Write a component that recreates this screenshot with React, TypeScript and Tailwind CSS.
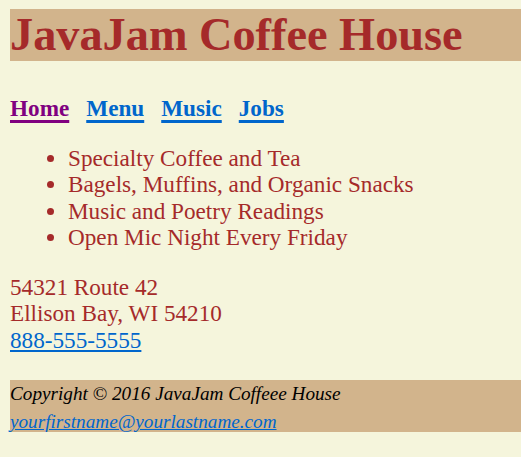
const serif = "font-['Liberation_Serif','Times_New_Roman',serif]";

const navLinks = [
  { href: "#home", label: "Home", visited: true },
  { href: "#menu", label: "Menu" },
  { href: "#music", label: "Music" },
  { href: "#jobs", label: "Jobs" },
];

const features = [
  "Specialty Coffee and Tea",
  "Bagels, Muffins, and Organic Snacks",
  "Music and Poetry Readings",
  "Open Mic Night Every Friday",
];

export default function App() {
  return (
    <div className={`min-h-screen bg-[#f5f5dc] pl-[10px] pt-[9px] text-[23.2px] leading-[26.5px] text-[#a52a2a] ${serif}`}>
      <header className="bg-[#d2b48c]">
        <h1 className="text-[46.3px] font-bold leading-[52px]">JavaJam Coffee House</h1>
      </header>

      <nav className="mt-[34px] flex gap-[17px] font-bold">
        {navLinks.map((l) => (
          <a
            key={l.label}
            href={l.href}
            className={`underline decoration-[3px] underline-offset-[4px] ${l.visited ? "text-[#800080]" : "text-[#0066cc]"}`}
          >
            {l.label}
          </a>
        ))}
      </nav>

      <ul className="mt-[23px] list-disc pl-[58px]">
        {features.map((f) => (
          <li key={f}>{f}</li>
        ))}
      </ul>

      <div className="mt-[23px]">
        54321 Route 42<br />
        Ellison Bay, WI 54210<br />
        <a href="tel:888-555-5555" className="text-[#0066cc] underline">888-555-5555</a>
      </div>

      <footer className="mt-[27px] h-[52px] bg-[#d2b48c] pt-px text-[19.2px] leading-[26px] text-black italic">
        <p>Copyright &copy; 2016 JavaJam Coffeee House</p>
        <a href="mailto:yourfirstname@yourlastname.com" className="mt-[2px] block w-fit text-[#0066cc] underline">
          yourfirstname@yourlastname.com
        </a>
      </footer>
    </div>
  );
}
